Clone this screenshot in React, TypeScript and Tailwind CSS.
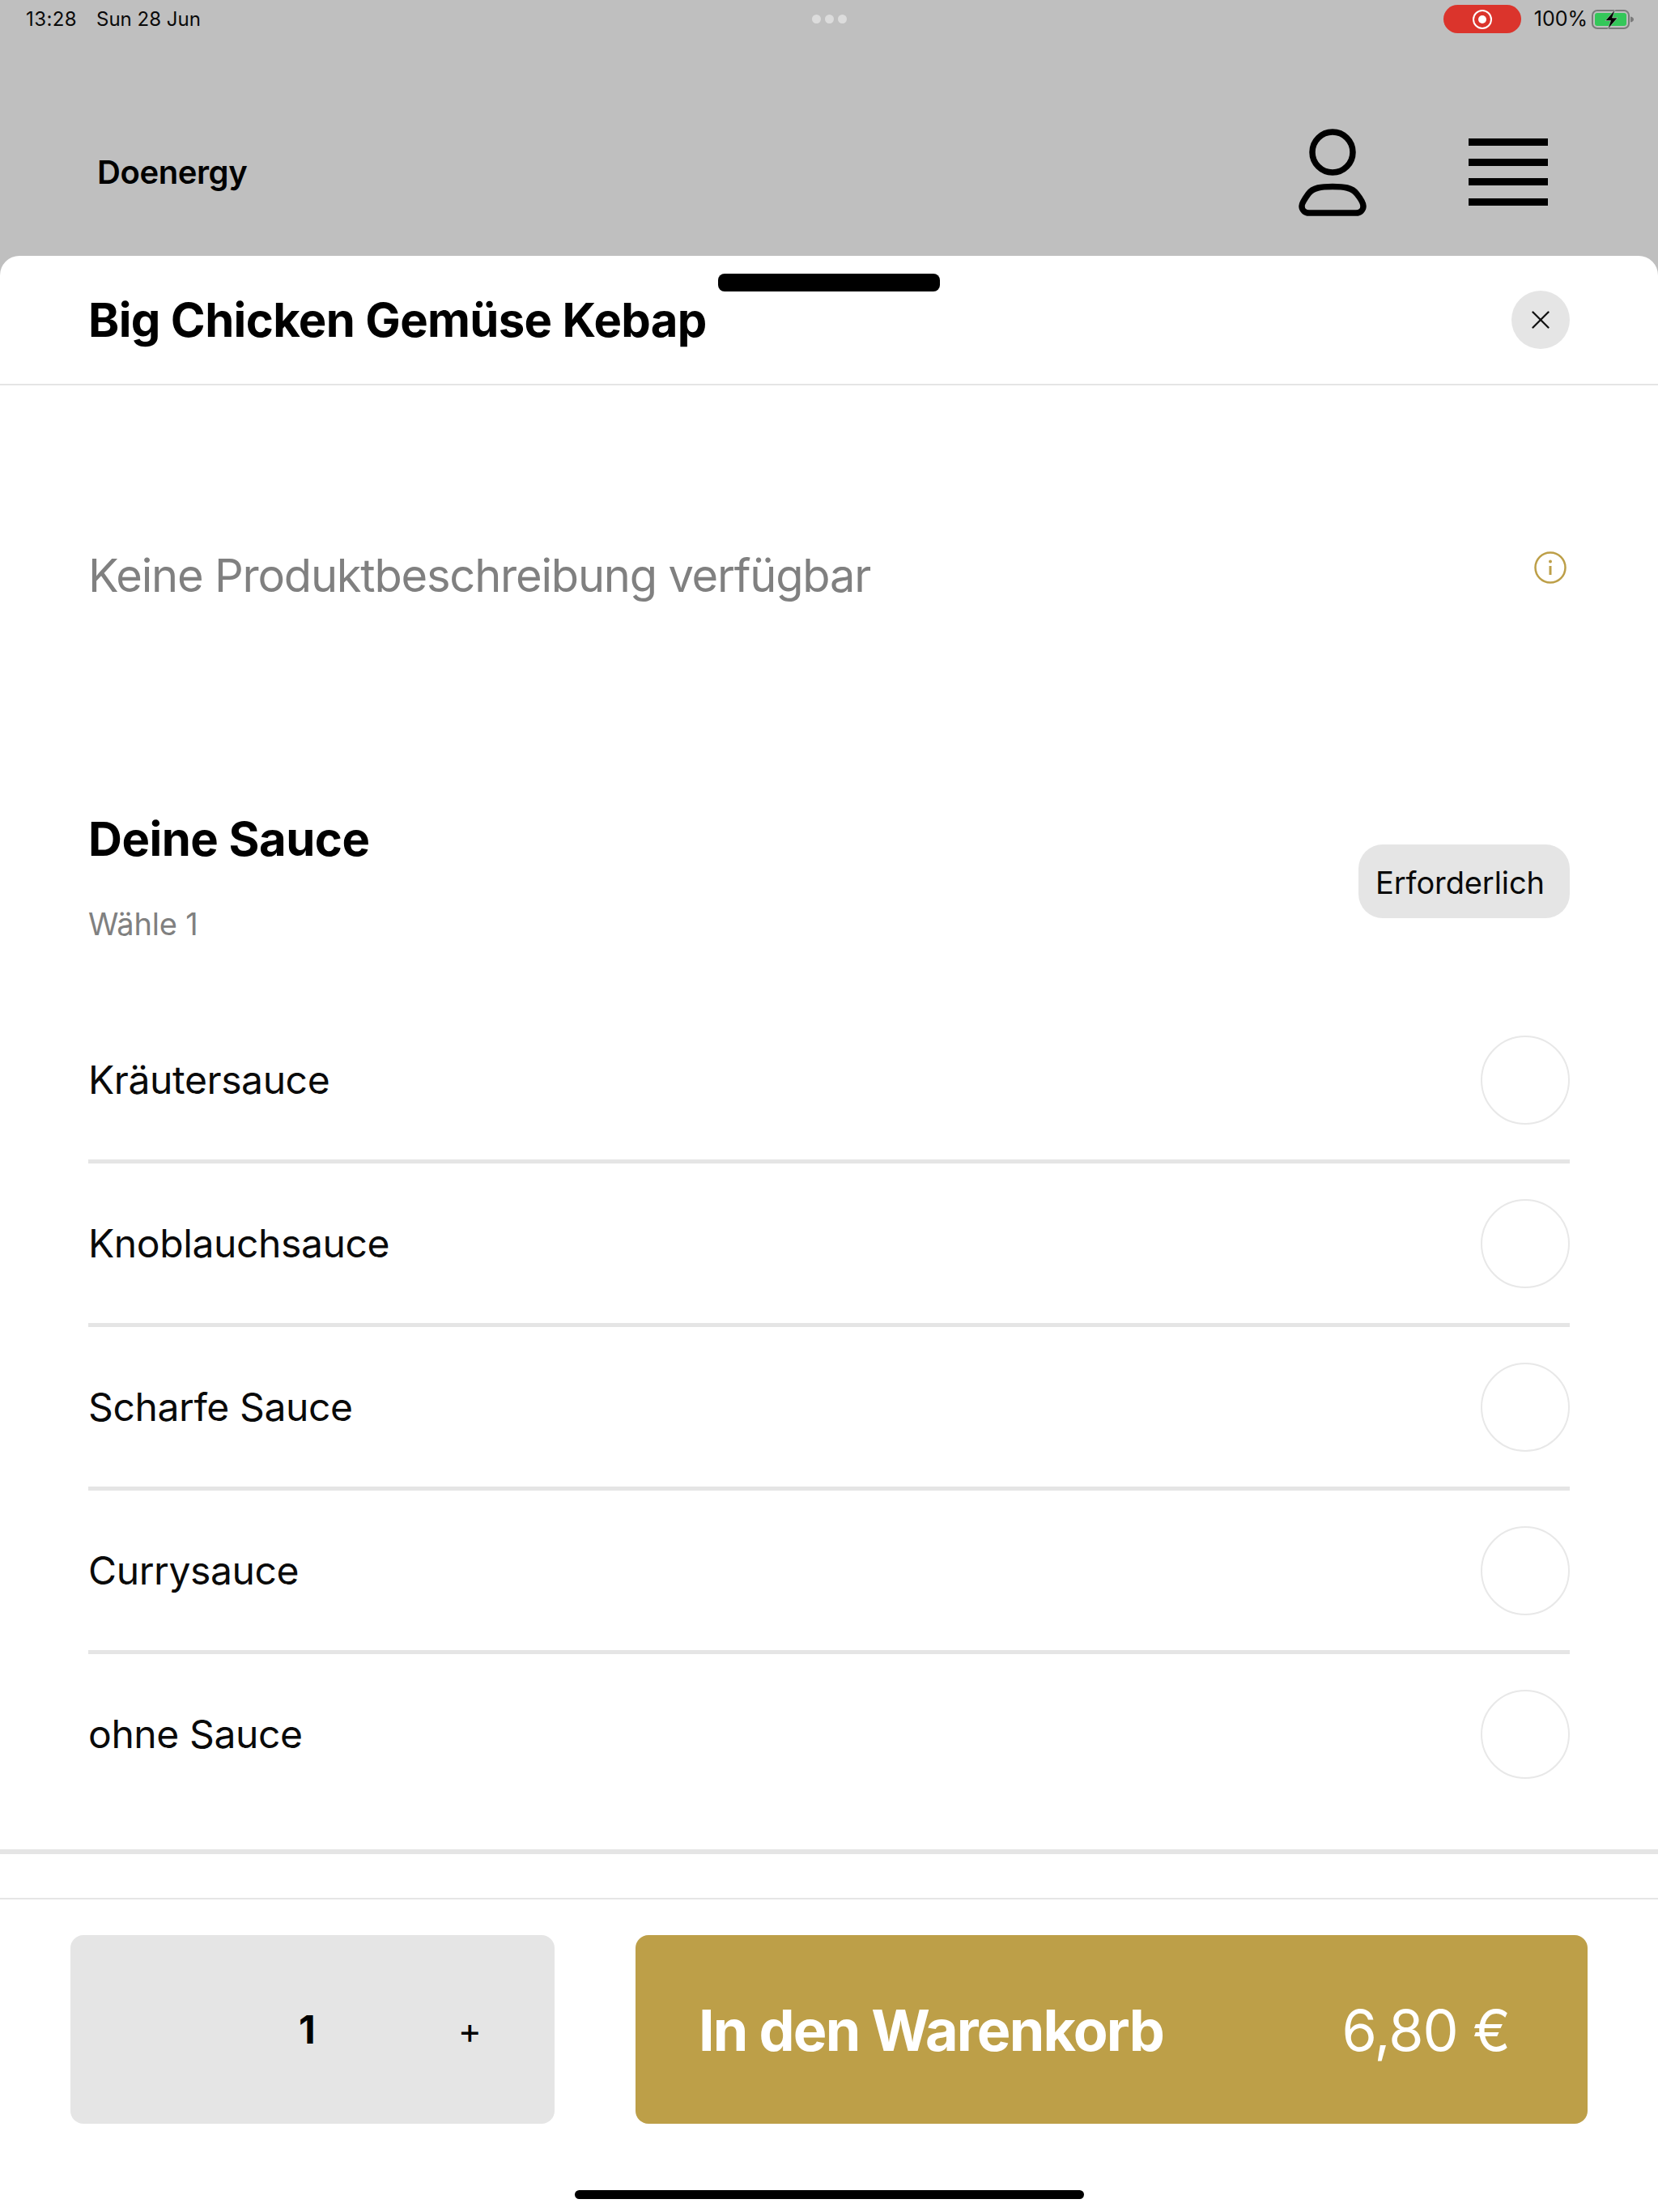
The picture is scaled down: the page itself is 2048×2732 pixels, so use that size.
import { X } from "lucide-react";

const sauces = ["Kräutersauce", "Knoblauchsauce", "Scharfe Sauce", "Currysauce", "ohne Sauce"];

function StatusBar() {
  return (
    <div className="flex h-[47px] items-center justify-between pl-[32px] pr-[28px] text-[#0a0a0a]">
      <div className="flex w-[400px] gap-[24px] text-[24px] leading-none">
        <span className="tracking-[0.4px]">13:28</span>
        <span>Sun 28 Jun</span>
      </div>
      <div className="flex gap-[5px]">
        <span className="size-[11px] rounded-full bg-[#dcdcdc]" />
        <span className="size-[11px] rounded-full bg-[#dcdcdc]" />
        <span className="size-[11px] rounded-full bg-[#dcdcdc]" />
      </div>
      <div className="flex w-[404px] items-center justify-end">
        <div className="mr-[16px] flex h-[35px] w-[96px] items-center justify-center rounded-full bg-[#db342c]">
          <span className="flex size-[24px] items-center justify-center rounded-full border-[2.5px] border-white">
            <span className="size-[10px] rounded-full bg-white" />
          </span>
        </div>
        <span className="mr-[5px] text-[25px] leading-none">100%</span>
        <svg width="54" height="24" viewBox="0 0 54 24">
          <rect x="1" y="1" width="45" height="22" rx="6" fill="none" stroke="#7a7a7a" strokeWidth="2" />
          <rect x="4" y="4" width="39" height="16" rx="3" fill="#34c759" />
          <path d="M48 8.500c2.500.6 4 1.700 4 3.500s-1.500 2.900-4 3.500z" fill="#7a7a7a" />
          <path d="M29 0 17 13.500h6.500L20 24l12-14h-6.500z" fill="#000" stroke="#bfbfbf" strokeWidth="0.6" />
        </svg>
      </div>
    </div>
  );
}

function NavBar() {
  return (
    <div className="flex h-[269px] items-center pl-[120px] pr-[136px] pt-[62px]">
      <span className="text-[40px] font-semibold tracking-[-0.4px] text-black">Doenergy</span>
      <svg className="ml-auto" width="84" height="108" viewBox="0 0 84 108" fill="none" stroke="#000" strokeWidth="7.5">
        <circle cx="42" cy="29" r="25" />
        <path d="M42 71.500c-14 0-24 1-30 9-4 5.500-8 12-8 15 0 5 4 8.500 9 8.500h58c5 0 9-3.500 9-8.500 0-3-4-10-8-15-6-8-16-9-30-9z" />
      </svg>
      <div className="ml-[126px] flex w-[98px] flex-col gap-[15.500px]">
        <span className="h-[9px] bg-black" />
        <span className="h-[9px] bg-black" />
        <span className="h-[9px] bg-black" />
        <span className="h-[9px] bg-black" />
      </div>
    </div>
  );
}

function SauceRow({ name, last }: { name: string; last: boolean }) {
  return (
    <div className={last ? "flex h-[202px] items-center justify-between pb-[4px]" : "flex h-[202px] items-center justify-between border-b-[5px] border-[#e5e5e5]"}>
      <span className="text-[48px] leading-none tracking-[-0.4px] text-[#0a0a0a]">{name}</span>
      <span className="size-[110px] rounded-full border-2 border-[#e8e8e8]" />
    </div>
  );
}

export default function App() {
  return (
    <div className="flex h-[2732px] w-[2048px] flex-col overflow-hidden bg-[#bfbfbf] font-['Inter',sans-serif]">
      <StatusBar />
      <NavBar />
      <div className="relative flex flex-1 flex-col rounded-t-[24px] bg-white">
        <div className="absolute left-[887px] top-[22px] h-[22px] w-[274px] rounded-[8px] bg-black" />

        <div className="flex h-[160px] items-center justify-between border-b-2 border-[#e5e5e5] pl-[109px] pr-[109px]">
          <h1 className="text-[58px] font-bold leading-none tracking-[-0.65px] text-black">Big Chicken Gemüse Kebap</h1>
          <button className="flex size-[72px] items-center justify-center rounded-full bg-[#e5e5e5]">
            <X size={38} strokeWidth={1.5} color="#111" />
          </button>
        </div>

        <div className="flex items-start justify-between pl-[109px] pr-[109px] pt-[200px]">
          <p className="text-[56px] leading-[70px] tracking-[-1.2px] text-[#808080]">Keine Produktbeschreibung verfügbar</p>
          <svg className="mr-[4px] mt-[5px]" width="40" height="40" viewBox="0 0 40 40" fill="none">
            <circle cx="20" cy="20" r="18.500" stroke="#bd9f48" strokeWidth="2.500" />
            <circle cx="20" cy="12.500" r="2" fill="#bd9f48" />
            <path d="M20 18v11" stroke="#bd9f48" strokeWidth="3" />
          </svg>
        </div>

        <div className="flex items-start justify-between pl-[109px] pr-[109px] pt-[255px]">
          <div className="flex flex-col">
            <h2 className="text-[58px] font-bold leading-[70px] tracking-[-0.5px] text-black">Deine Sauce</h2>
            <span className="mt-[45px] text-[38px] leading-[50px] tracking-[-0.2px] text-[#808080]">Wähle 1</span>
          </div>
          <div className="mt-[42px] flex h-[91px] w-[261px] items-center rounded-[30px] bg-[#e5e5e5] pl-[21px] pt-[3px] text-[38px] tracking-[-0.1px] text-[#0a0a0a]">
            Erforderlich
          </div>
        </div>

        <div className="flex flex-col pl-[109px] pr-[109px] pt-[69px]">
          {sauces.map((name, i) => (
            <SauceRow key={name} name={name} last={i === sauces.length - 1} />
          ))}
        </div>

        <div className="mt-[39px] h-[6px] bg-[#e5e5e5]" />

        <div className="mt-[54px] flex flex-1 flex-col border-t-2 border-[#e5e5e5]">
          <div className="flex gap-[100px] pl-[87px] pr-[87px] pt-[44px]">
            <div className="flex h-[233px] w-[598px] items-center rounded-[16px] bg-[#e5e5e5] pl-[282px] text-black">
              <span className="text-[48px] font-bold leading-none">1</span>
              <span className="ml-[176px] mt-[2px] text-[44px] leading-none">+</span>
            </div>
            <button className="flex h-[233px] flex-1 items-center justify-between rounded-[16px] bg-[#bd9f48] pl-[78px] pr-[96px] pt-[3px] text-white">
              <span className="text-[70px] font-bold leading-none tracking-[-1.8px]">In den Warenkorb</span>
              <span className="text-[70px] leading-none tracking-[-1px]">6,80 €</span>
            </button>
          </div>
          <div className="mx-auto mt-[82px] h-[11px] w-[629px] rounded-full bg-black" />
        </div>
      </div>
    </div>
  );
}
